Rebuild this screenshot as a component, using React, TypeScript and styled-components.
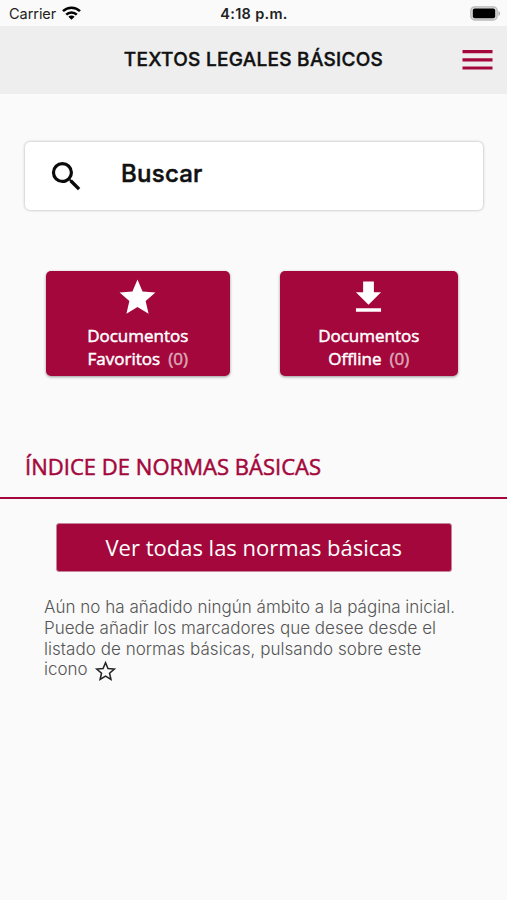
import React from "react";
import styled, { createGlobalStyle } from "styled-components";

const brand = "#a4073b";

const GlobalStyle = createGlobalStyle`
  * { box-sizing: border-box; }
  body { margin: 0; background: #fafafa; }
`;

const Screen = styled.div`
  width: 100%;
  max-width: 507px;
  height: 900px;
  overflow: hidden;
  background: #fafafa;
  font-family: "Open Sans", sans-serif;
`;

const StatusBar = styled.div`
  height: 26px;
  padding: 2px 7px 0 9px;
  display: grid;
  grid-template-columns: 1fr auto 1fr;
  align-items: center;
  font: 400 14.5px/22px Inter, sans-serif;
  color: #222;
`;

const Carrier = styled.div`
  display: flex;
  align-items: center;
  gap: 6px;
  letter-spacing: -0.05px;

  svg {
    margin-top: -2px;
  }
`;

const Clock = styled.div`
  margin-right: 1px;
  font-weight: 600;
  font-size: 14.5px;
  letter-spacing: 0.3px;
`;

const BatterySlot = styled.div`
  display: flex;
  justify-content: flex-end;

  svg {
    margin: -2px -1px 0 0;
  }
`;

const Header = styled.header`
  height: 68px;
  display: grid;
  grid-template-columns: 48px 1fr 48px;
  align-items: center;
  background: #eee;
`;

const Title = styled.h1`
  margin: 0;
  text-align: center;
  white-space: nowrap;
  font: 500 19px/24px Inter, sans-serif;
  letter-spacing: 0.28px;
  -webkit-text-stroke: 0.4px #111;
  color: #111;
`;

const MenuButton = styled.button`
  padding: 0;
  border: 0;
  background: none;
  display: flex;
  margin-left: 3px;
`;

const SearchBox = styled.div`
  margin: 48px 24px 0 25px;
  height: 68px;
  padding-left: 22px;
  display: flex;
  align-items: center;
  background: #fff;
  border-radius: 5px;
  box-shadow: 0 0 3px rgba(0, 0, 0, 0.32);
`;

const SearchLabel = styled.span`
  margin: 0 0 4px 35px;
  font: 500 24px/30px Inter, sans-serif;
  letter-spacing: 0.25px;
  -webkit-text-stroke: 0.5px #111;
  color: #111;
`;

const Cards = styled.div`
  margin: 61px 49px 0 46px;
  display: grid;
  grid-template-columns: 183.5px 178.5px;
  justify-content: space-between;
`;

const Card = styled.button`
  height: 105px;
  padding: 5px 0 0;
  border: 0;
  border-radius: 5px;
  display: flex;
  flex-direction: column;
  align-items: center;
  background: ${brand};
  box-shadow: 0 1px 3px rgba(0, 0, 0, 0.4);
  font: 400 17px/23px "Open Sans", sans-serif;
  color: #fff;
  -webkit-text-stroke: 0.5px currentColor;
`;

const CardLabel = styled.span`
  margin-top: 5px;
  white-space: nowrap;
`;

const Count = styled.span`
  margin-left: 8px;
  color: #dba9b9;
`;

const SectionTitle = styled.h2`
  margin: 0;
  height: 123px;
  padding: 74px 0 0 25px;
  border-bottom: 2px solid ${brand};
  font: 400 22px/32px "Open Sans", sans-serif;
  white-space: nowrap;
  letter-spacing: 0.03px;
  color: ${brand};
  -webkit-text-stroke: 0.5px ${brand};
`;

const AllButton = styled.button`
  display: block;
  margin: 24px 0 0 56px;
  width: 395.500px;
  height: 49px;
  padding: 0 0 2px;
  border: 1px solid #c6849b;
  border-radius: 3px;
  background: ${brand};
  color: #fff;
  font: 400 22px/30px "Open Sans", sans-serif;
`;

const Hint = styled.p`
  margin: 25px 0 0 44px;
  font: 300 17px/20.8px Inter, sans-serif;
  color: #555;
  white-space: nowrap;
`;

const HintLine = styled.span<{ $spacing: number }>`
  display: block;
  height: 20.8px;
  letter-spacing: ${(p) => p.$spacing}px;

  svg {
    margin-left: 2px;
    vertical-align: -8px;
  }
`;

const starPath =
  "M12 17.27 18.18 21l-1.64-7.03L22 9.24l-7.19-.61L12 2 9.19 8.63 2 9.24l5.46 4.73L5.82 21z";

const WifiIcon = () => (
  <svg width="19" height="14" viewBox="0 0 19 14">
    <g fill="none" stroke="#000" strokeWidth="2.5">
      <path d="M1 5.2a12.2 12.2 0 0 1 17 0" />
      <path d="M4.2 8.6a7.6 7.6 0 0 1 10.6 0" />
    </g>
    <path d="M9.5 13.8 6.4 10.8a4.4 4.4 0 0 1 6.2 0z" />
  </svg>
);

const BatteryIcon = () => (
  <svg width="31" height="15" viewBox="0 0 31 15">
    <rect x=".8" y=".8" width="26.4" height="13.2" rx="4" fill="#ddd" stroke="#b9b9b9" strokeWidth="1.3" />
    <rect x="2.8" y="2.6" width="22.4" height="9.6" rx="2" />
    <path d="M28.5 5v5c2-.8 2-4.200 0-5z" fill="#aaa" />
  </svg>
);

const MenuIcon = () => (
  <svg width="31" height="22" viewBox="0 0 31 22" fill={brand}>
    <path d="M.5 1h30v3.200H.5zM.5 9.200h30v3.200H.5zM.5 17.400h30v3.200H.5z" />
  </svg>
);

const SearchIcon = () => (
  <svg width="39" height="39" viewBox="0 0 24 24" fill="#0b0b0b">
    <path d="M15.500 14h-.79l-.28-.27A6.470 6.470 0 0 0 16 9.500 6.500 6.500 0 1 0 9.500 16c1.610 0 3.090-.59 4.230-1.570l.27.28v.79l5 4.990L20.490 19zm-6 0C7.010 14 5 11.990 5 9.500S7.010 5 9.500 5 14 7.010 14 9.500 11.990 14 9.500 14" />
  </svg>
);

const StarIcon = () => (
  <svg width="43" height="43" viewBox="0 0 24 24" fill="#fff">
    <path d={starPath} />
  </svg>
);

const DownloadIcon = () => (
  <svg width="43" height="43" viewBox="0 0 24 24" fill="#fff">
    <path d="M19 9h-4V3H9v6H5l7 7zM5 18v2h14v-2z" />
  </svg>
);

const StarOutlineIcon = () => (
  <svg width="23" height="23" viewBox="0 0 24 24" fill="none" stroke="#222" strokeWidth="1.7">
    <path d={starPath} transform="translate(1 1) scale(.92)" />
  </svg>
);

const hintLines = [
  { text: "Aún no ha añadido ningún ámbito a la página inicial.", spacing: 0.015 },
  { text: "Puede añadir los marcadores que desee desde el", spacing: 0.02 },
  { text: "listado de normas básicas, pulsando sobre este", spacing: 0.04 },
];

export default function App() {
  return (
    <Screen>
      <GlobalStyle />
      <StatusBar>
        <Carrier>
          Carrier <WifiIcon />
        </Carrier>
        <Clock>4:18 p.m.</Clock>
        <BatterySlot>
          <BatteryIcon />
        </BatterySlot>
      </StatusBar>
      <Header>
        <span />
        <Title>TEXTOS LEGALES BÁSICOS</Title>
        <MenuButton aria-label="Menú">
          <MenuIcon />
        </MenuButton>
      </Header>
      <SearchBox>
        <SearchIcon />
        <SearchLabel>Buscar</SearchLabel>
      </SearchBox>
      <Cards>
        <Card>
          <StarIcon />
          <CardLabel>
            Documentos
            <br />
            Favoritos<Count>(0)</Count>
          </CardLabel>
        </Card>
        <Card>
          <DownloadIcon />
          <CardLabel>
            Documentos
            <br />
            Offline<Count>(0)</Count>
          </CardLabel>
        </Card>
      </Cards>
      <SectionTitle>ÍNDICE DE NORMAS BÁSICAS</SectionTitle>
      <AllButton>Ver todas las normas básicas</AllButton>
      <Hint>
        {hintLines.map((line) => (
          <HintLine key={line.text} $spacing={line.spacing}>
            {line.text}
          </HintLine>
        ))}
        <HintLine $spacing={0}>
          icono <StarOutlineIcon />
        </HintLine>
      </Hint>
    </Screen>
  );
}
